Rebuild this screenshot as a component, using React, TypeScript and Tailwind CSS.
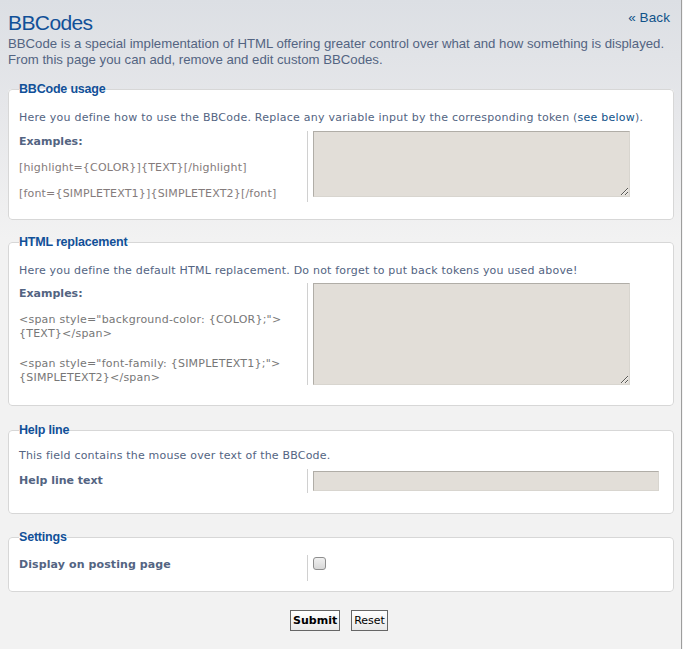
import React from "react";

const body = "font-['DejaVu_Sans',Verdana,sans-serif]";
const head = "font-['Liberation_Sans',Arial,sans-serif]";

function Legend({ children }: { children: React.ReactNode }) {
  return (
    <legend
      className={`${head} px-0 text-[12.5px] font-bold leading-[14px] text-[#115098] tracking-[-0.2px]`}
    >
      {children}
    </legend>
  );
}

function Row({
  label,
  children,
  rowClass,
}: {
  label: React.ReactNode;
  children: React.ReactNode;
  rowClass?: string;
}) {
  return (
    <div className={`flex ${rowClass ?? ""}`}>
      <div className="w-[289px] shrink-0 border-r border-[#d0d0d0]">{label}</div>
      <div className="pl-[5px]">{children}</div>
    </div>
  );
}

const textareaCls =
  "block resize bg-[#e2ded8] border border-t-[#b0ada7] border-l-[#b0ada7] border-r-[#d8d5cf] border-b-[#d8d5cf] outline-none";

export default function App() {
  return (
    <div className="min-h-[649px] w-[683px] bg-[#f4f4f4]">
      <div
        className={`${body} min-h-[649px] w-[682px] border-r border-[#9d9d9d] bg-[linear-gradient(to_bottom,#dcdfe4_0px,#e6e7ea_110px,#f2f2f2_240px,#f2f2f2_100%)] pl-[8px] pr-[7px] pb-[18px] text-[11px] text-[#536482]`}
      >
        <div className="flex items-start justify-between pt-[8px]">
          <h1
            className={`${head} mt-[2px] text-[21px] leading-[26px] tracking-[-0.6px] text-[#115098]`}
          >
            BBCodes
          </h1>
          <a
            href="#"
            className={`${head} mt-[2px] mr-[4px] text-[13.5px] leading-[16px] text-[#105289] tracking-[0.1px]`}
          >
            « Back
          </a>
        </div>
        <p className={`${head} text-[13.2px] leading-[16px] text-[#536482]`}>
          BBCode is a special implementation of HTML offering greater control over what and
          how something is displayed. From this page you can add, remove and edit custom BBCodes.
        </p>

        {/* BBCode usage */}
        <fieldset className="mt-[14px] rounded-[4px] border border-[#d7d7d7] bg-white px-[10px] pb-[17px]">
          <Legend>BBCode usage</Legend>
          <p className="mt-[15px] leading-[14px] tracking-[0.24px]">
            Here you define how to use the BBCode. Replace any variable input by the corresponding
            token (<a href="#" className="text-[#105289]">see below</a>).
          </p>
          <Row
            rowClass="mt-[6px]"
            label={
              <div className="pt-[4px] pb-[1px]">
                <p className="font-bold leading-[14px]">Examples:</p>
                <p className="mt-[12px] leading-[14px] tracking-[0.18px] text-[#847b7b]">
                  [highlight={"{COLOR}"}]{"{TEXT}"}[/highlight]
                </p>
                <p className="mt-[12px] leading-[14px] tracking-[0.18px] text-[#847b7b]">
                  [font={"{SIMPLETEXT1}"}]{"{SIMPLETEXT2}"}[/font]
                </p>
              </div>
            }
          >
            <textarea className={`${textareaCls} h-[66px] w-[317px]`} />
          </Row>
        </fieldset>

        {/* HTML replacement */}
        <fieldset className="mt-[15px] rounded-[4px] border border-[#d7d7d7] bg-white px-[10px] pb-[20px]">
          <Legend>HTML replacement</Legend>
          <p className="mt-[15px] leading-[14px] tracking-[0.2px]">
            Here you define the default HTML replacement. Do not forget to put back tokens you used
            above!
          </p>
          <Row
            rowClass="mt-[5px]"
            label={
              <div className="pt-[4px]">
                <p className="font-bold leading-[14px]">Examples:</p>
                <p className="mt-[12px] leading-[14px] tracking-[0.22px] text-[#777]">
                  &lt;span style="background-color: {"{COLOR}"};"&gt;
                  <br />
                  {"{TEXT}"}&lt;/span&gt;
                </p>
                <p className="mt-[16px] leading-[14px] tracking-[0.22px] text-[#777]">
                  &lt;span style="font-family: {"{SIMPLETEXT1}"};"&gt;
                  <br />
                  {"{SIMPLETEXT2}"}&lt;/span&gt;
                </p>
              </div>
            }
          >
            <textarea className={`${textareaCls} h-[102px] w-[317px]`} />
          </Row>
        </fieldset>

        {/* Help line */}
        <fieldset className="mt-[17px] rounded-[4px] border border-[#d7d7d7] bg-white px-[10px] pb-[20px]">
          <Legend>Help line</Legend>
          <p className="mt-[12px] leading-[14px] tracking-[0.2px]">
            This field contains the mouse over text of the BBCode.
          </p>
          <Row
            rowClass="mt-[6px]"
            label={<p className="py-[5px] font-bold leading-[14px]">Help line text</p>}
          >
            <input
              type="text"
              className="mt-[2px] block h-[20px] w-[346px] bg-[#e2ded8] border border-t-[#b0ada7] border-l-[#b0ada7] border-r-[#d8d5cf] border-b-[#d8d5cf] outline-none"
            />
          </Row>
        </fieldset>

        {/* Settings */}
        <fieldset className="mt-[16px] rounded-[4px] border border-[#d7d7d7] bg-white px-[10px] pb-[10px]">
          <Legend>Settings</Legend>
          <Row
            rowClass="mt-[11px]"
            label={
              <p className="pt-[3px] pb-[9px] font-bold leading-[14px] tracking-[0.1px]">
                Display on posting page
              </p>
            }
          >
            <input
              type="checkbox"
              className="mt-[2px] block h-[13px] w-[13px] appearance-none rounded-[3px] border border-[#8e8e8e] bg-[linear-gradient(to_bottom,#f0f0f0,#d8d8d8)]"
            />
          </Row>
        </fieldset>

        <div className="mt-[18px] flex justify-center gap-[11px] pr-[4px]">
          <button className="h-[21px] border border-[#666] bg-[linear-gradient(to_bottom,#ffffff,#e9e9e9)] px-[2px] text-[11px] font-bold leading-[18px] text-black">
            Submit
          </button>
          <button className="h-[21px] border border-[#666] bg-[linear-gradient(to_bottom,#ffffff,#e9e9e9)] px-[2px] text-[11px] leading-[18px] text-black">
            Reset
          </button>
        </div>
      </div>
    </div>
  );
}
